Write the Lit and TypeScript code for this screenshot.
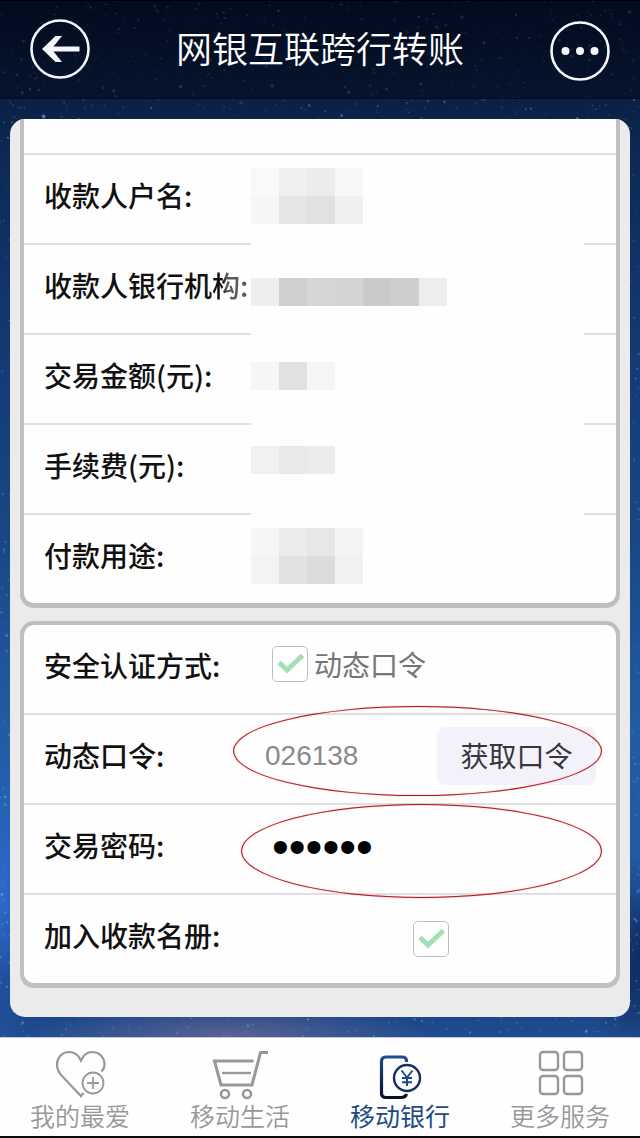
import { LitElement, html, svg, css, nothing } from "lit";
import { customElement, property } from "lit/decorators.js";
import { styleMap } from "lit/directives/style-map.js";

interface Star {
  x: number;
  y: number;
  r: number;
  o: number;
}

/** Fixed-seed generator, so that the sky looks the same on each visit. */
function makeStars(count: number, seed: number): Star[] {
  let s = seed;
  const next = () => {
    s = (s * 16807) % 2147483647;
    return s / 2147483647;
  };
  return Array.from({ length: count }, () => ({
    x: Math.round(next() * 6400) / 10,
    y: Math.round(next() * 11380) / 10,
    r: 0.6 + next() * next() * 1.3,
    o: 0.1 + next() * next() * 0.6,
  }));
}

const STARS = makeStars(5200, 4711);

@customElement("starry-sky")
class StarrySky extends LitElement {
  static styles = css`
    :host {
      display: block;
      overflow: hidden;
      background:
        radial-gradient(ellipse 200px 30px at 36% 91%, rgba(150, 120, 150, 0.5), transparent),
        radial-gradient(ellipse 60px 100px at 100% 84%, rgba(14, 40, 90, 0.8), transparent),
        radial-gradient(ellipse 40px 160px at 0% 79%, rgba(46, 110, 215, 0.8), transparent),
        linear-gradient(#051024 0, #0a2145 9%, #0d2a56 14%, #123770 28%, #194886 48%, #225ca4 64%, #2359a4 78%, #163c78 86%, #1f4c90 91%, #1f4c90 100%);
    }
    svg {
      display: block;
      width: 100%;
      height: 100%;
      fill: #7fb2e6;
    }
  `;
  render() {
    return html`<svg viewBox="0 0 640 1138" preserveAspectRatio="xMidYMin slice" aria-hidden="true">
      ${STARS.map((s) => svg`<circle cx=${s.x} cy=${s.y} r=${s.r} opacity=${s.o}></circle>`)}
    </svg>`;
  }
}

@customElement("tick-box")
class TickBox extends LitElement {
  @property() name = "";
  @property() text = "";

  static styles = css`
    label {
      display: flex;
      align-items: center;
      gap: 6px;
      font-size: 28px;
      line-height: 36px;
      color: #757577;
    }
    .box {
      display: grid;
      width: 36px;
      height: 36px;
    }
    input,
    svg {
      grid-area: 1 / 1;
      width: 36px;
      height: 36px;
      margin: 0;
      box-sizing: border-box;
    }
    input {
      appearance: none;
      border: 1px solid #c0bec2;
      border-radius: 5px;
      background: #fff;
    }
    svg {
      visibility: hidden;
      pointer-events: none;
      fill: none;
      stroke: #a6dfb4;
      stroke-width: 5;
    }
    input:checked + svg {
      visibility: visible;
    }
  `;
  render() {
    return html`<label>
      <span class="box">
        <input type="checkbox" checked aria-label=${this.text ? nothing : this.name} />
        <svg viewBox="0 0 36 36" aria-hidden="true"><path d="M7 16.5 L15 24 L30.5 9.5" /></svg>
      </span>
      ${this.text}
    </label>`;
  }
}

interface Mosaic {
  columns: number;
  cells: string[];
}

/** A value that is hidden behind grey squares. */
@customElement("masked-value")
class MaskedValue extends LitElement {
  @property({ attribute: false }) mosaic!: Mosaic;

  static styles = css`
    .mosaic {
      display: grid;
      grid-auto-rows: 28px;
      width: max-content;
    }
  `;
  render() {
    const { columns, cells } = this.mosaic;
    return html`<div class="mosaic" role="img" aria-label="***" style=${styleMap({ gridTemplateColumns: `repeat(${columns}, 28px)` })}>
      ${cells.map((c) => html`<span style=${styleMap({ background: c })}></span>`)}
    </div>`;
  }
}

const PAYEE: { label: string; kind: string; mosaic: Mosaic }[] = [
  {
    label: "收款人户名:",
    kind: "tall",
    mosaic: { columns: 4, cells: ["#f9f8fa", "#f0eff1", "#ecebed", "#f7f6f9", "#f6f5f7", "#e5e4e6", "#e1e0e2", "#f0eff2"] },
  },
  {
    label: "收款人银行机构:",
    kind: "bank",
    mosaic: { columns: 7, cells: ["#eeedef", "#cfced0", "#d6d5d7", "#d4d3d5", "#cac9cb", "#cecdcf", "#edecee"] },
  },
  { label: "交易金额(元):", kind: "mid", mosaic: { columns: 3, cells: ["#f6f5f7", "#e1e0e2", "#f5f4f7"] } },
  { label: "手续费(元):", kind: "high", mosaic: { columns: 3, cells: ["#f1f0f2", "#e9e8ea", "#ecebed"] } },
  {
    label: "付款用途:",
    kind: "tall",
    mosaic: { columns: 4, cells: ["#f6f5f7", "#ebeaec", "#e7e6e8", "#f4f3f6", "#f3f2f4", "#e2e1e3", "#dcdbdd", "#f1f0f3"] },
  },
];

const NAV = [
  {
    label: "我的最爱",
    icon: svg`<path stroke-width="2.200" d="M50.500 21.500C52.500 19.500 53.500 17 53.500 14.500C53.500 7 48 2 41 2C36 2 32.500 5 30 10.500C27.500 5 23.500 2 18 2C11 2 6 8 6 14.500C6 19.500 8 23 11 26L30 46L32.500 43"/><circle cx="42" cy="33" r="10.500" stroke-width="1.800"/><path stroke-width="1.800" d="M36 33h12M42 27v12"/>`,
  },
  {
    label: "移动生活",
    icon: svg`<path stroke-width="3" d="M42.500 11H3.500L10 35H41L49.500 2.500H57"/><path stroke-width="2.400" d="M11 23H40"/><circle cx="14" cy="44" r="4" stroke-width="2.600"/><circle cx="36" cy="44" r="4" stroke-width="2.600"/>`,
  },
  {
    label: "移动银行",
    active: true,
    icon: svg`<defs><linearGradient id="phone" x1="0" y1="0" x2="0" y2="1"><stop offset="0" stop-color="#1f4e8c"/><stop offset="1" stop-color="#071022"/></linearGradient></defs><path stroke="url(#phone)" stroke-width="3.200" d="M35.500 12V11Q35.500 7 31 7H15Q10.500 7 10.500 11.500V43Q10.500 47.500 15 47.500H30Q34.500 47.500 35.500 44"/><circle cx="36" cy="28" r="13" stroke="#14305c" stroke-width="2.400"/><path stroke="#1d4a85" stroke-width="2" d="M30.500 20.500L36 27.500L41.500 20.500M36 27.500V36M31 28H41M31 32.200H41"/>`,
  },
  {
    label: "更多服务",
    icon: svg`<g stroke-width="2.400"><rect x="9" y="2" width="18" height="18" rx="3"/><rect x="33" y="2" width="18" height="18" rx="3"/><rect x="9" y="26" width="18" height="18" rx="3"/><rect x="33" y="26" width="18" height="18" rx="3"/></g>`,
  },
];

@customElement("app-root")
class AppRoot extends LitElement {
  static styles = css`
    :host {
      display: flex;
      flex-direction: column;
      position: relative;
      min-height: 100vh;
      font-family: "Liberation Sans", "Noto Sans CJK SC", sans-serif;
      color: #111;
    }
    * {
      box-sizing: border-box;
    }
    starry-sky {
      position: absolute;
      inset: 0;
      z-index: -1;
    }
    header {
      display: flex;
      justify-content: space-between;
      align-items: center;
      height: 99px;
      padding: 0 30px;
      background: rgba(2, 8, 24, 0.5);
      border-top: 1px solid #000;
      border-bottom: 1px solid #020a1c;
    }
    h1 {
      margin: 0;
      padding-bottom: 6px;
      font: 350 36px/52px "Noto Sans CJK SC", sans-serif;
      color: #fff;
    }
    .round {
      width: 60px;
      height: 60px;
      padding: 0;
      border: 0;
      background: none;
      color: #f4f6fc;
    }
    svg {
      display: block;
      overflow: visible;
      fill: none;
      stroke: currentColor;
    }
    main {
      flex: 1;
      padding: 20px 10px;
    }
    .panel {
      display: grid;
      gap: 13px;
      padding: 0 10px 29px;
      border-radius: 15px;
      background: #ebeaec;
      overflow: hidden;
    }
    .card {
      min-width: 0;
      border: 4px solid #bfbec0;
      border-bottom-width: 5px;
      border-radius: 14px;
      background: #fefefe;
    }
    .card.cut {
      border-top: 0;
      border-radius: 0 0 14px 14px;
    }
    .row {
      display: grid;
      grid-template-columns: 207px 1fr;
      height: 90px;
      padding-left: 20px;
      border-bottom: 2px solid #e0dfe1;
      position: relative;
    }
    .row.rest {
      height: 36px;
    }
    .row:last-child {
      height: 88px;
      border-bottom: 0;
    }
    .name {
      padding-top: 20px;
      font: 500 28px/40px "Noto Sans CJK SC", sans-serif;
      white-space: nowrap;
    }
    .tall {
      padding-top: 13px;
    }
    .bank {
      padding-top: 33px;
    }
    .mid {
      padding-top: 27px;
    }
    .high {
      padding-top: 21px;
    }
    .haze::after {
      content: "";
      position: absolute;
      left: 227px;
      right: 32px;
      bottom: -10px;
      height: 26px;
      background: #fdfcfe;
    }
    .fade {
      background: linear-gradient(90deg, #111 30%, #5a5a5c 40%);
      background-clip: text;
      -webkit-background-clip: text;
      color: transparent;
    }
    .value {
      display: flex;
      align-items: center;
      min-width: 0;
      font-family: "Noto Sans CJK SC", sans-serif;
    }
    .method {
      padding: 0 0 10px 21px;
    }
    .join {
      padding-left: 162px;
    }
    input {
      border: 0;
      padding: 0;
      min-width: 0;
      background: none;
      outline: none;
    }
    .code {
      justify-content: space-between;
      padding: 0 20px 7px 14px;
    }
    .code input {
      flex: 1;
      font: 28px/40px "Liberation Sans", sans-serif;
      color: #8a8a8c;
    }
    .fetch {
      width: 159px;
      height: 58px;
      border: 0;
      border-radius: 8px;
      padding: 0 0 2px;
      background: #f3f2fa;
      font: 28px/40px "Noto Sans CJK SC", sans-serif;
      color: #36363c;
    }
    .secret {
      padding: 0 20px 5px 21px;
    }
    .secret input {
      width: 100%;
      height: 56px;
      font: 48px/56px "Liberation Sans", sans-serif;
      color: #000;
    }
    .ring {
      position: absolute;
      inset: -9px 14px 7px 209px;
      border: 1px solid #b3141a;
      border-radius: 50%;
      box-shadow: 0 0 1px #d0585c, inset 0 0 1px #d0585c;
      pointer-events: none;
      z-index: 1;
    }
    .ring.low {
      inset: -1px 14px -5px 217px;
    }
    nav {
      display: grid;
      grid-template-columns: repeat(4, 1fr);
      height: 101px;
      padding-top: 12px;
      background: #fefefe;
      border-top: 1px solid #c4c8d0;
      border-bottom: 2px solid #0a0a0a;
    }
    nav a {
      display: flex;
      flex-direction: column;
      align-items: center;
      font: 350 25px/30px "Noto Sans CJK SC", sans-serif;
      color: #98979a;
      text-decoration: none;
    }
    nav a.active {
      font-weight: 400;
      color: #1d4a85;
    }
  `;

  render() {
    return html`
      <starry-sky></starry-sky>
      <header>
        <button class="round" aria-label="返回">
          <svg viewBox="0 0 60 60"><circle cx="30" cy="29" r="28.500" stroke-width="2.600" /><path stroke-width="5" d="M49.500 29H18" /><path fill="currentColor" stroke="none" d="M12 29L25.500 16H32L21.500 29L32 42H25.500Z" /></svg>
        </button>
        <h1>网银互联跨行转账</h1>
        <button class="round" aria-label="更多">
          <svg viewBox="0 0 60 60"><circle cx="30" cy="31" r="28.500" stroke-width="2.600" /><g fill="currentColor" stroke="none"><circle cx="15.500" cy="31" r="4" /><circle cx="30" cy="31" r="4" /><circle cx="44.500" cy="31" r="4" /></g></svg>
        </button>
      </header>
      <main>
        <div class="panel">
          <section class="card cut">
            <div class="row rest"></div>
            ${PAYEE.map(
              (p, i) => html`<div class="row ${i < PAYEE.length - 1 ? "haze" : ""}">
                <span class="name">${p.kind === "bank" ? html`收款人银行机<span class="fade">构:</span>` : p.label}</span>
                <masked-value class=${p.kind} .mosaic=${p.mosaic}></masked-value>
              </div>`
            )}
          </section>
          <form class="card">
            <div class="row">
              <span class="name">安全认证方式:</span>
              <div class="value method"><tick-box text="动态口令"></tick-box></div>
            </div>
            <div class="row">
              <label class="name" for="code">动态口令:</label>
              <div class="value code">
                <input id="code" type="text" inputmode="numeric" value="026138" />
                <button class="fetch" type="button">获取口令</button>
              </div>
              <span class="ring"></span>
            </div>
            <div class="row">
              <label class="name" for="secret">交易密码:</label>
              <div class="value secret"><input id="secret" type="password" value="888888" autocomplete="off" /></div>
              <span class="ring low"></span>
            </div>
            <div class="row">
              <span class="name">加入收款名册:</span>
              <div class="value join"><tick-box name="加入收款名册"></tick-box></div>
            </div>
          </form>
        </div>
      </main>
      <nav>
        ${NAV.map(
          (n) => html`<a href="#" class=${n.active ? "active" : ""}>
            <svg width="58" height="50" viewBox="0 0 58 50" aria-hidden="true">${n.icon}</svg>
            ${n.label}
          </a>`
        )}
      </nav>
    `;
  }
}
